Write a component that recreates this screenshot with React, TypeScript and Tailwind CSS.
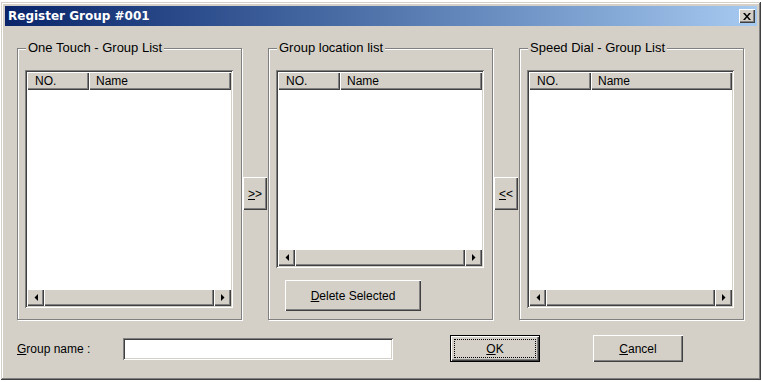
import React from 'react';

const raised = 'bg-[#d4d0c8] shadow-[inset_1px_1px_0_#ffffff,inset_-1px_-1px_0_#404040,inset_-2px_-2px_0_#808080]';
const sunken = 'shadow-[inset_1px_1px_0_#808080,inset_-1px_-1px_0_#ffffff,inset_2px_2px_0_#404040,inset_-2px_-2px_0_#d4d0c8]';

function Arrow({ dir }: { dir: 'left' | 'right' }) {
    return (
        <svg width="4" height="7" viewBox="0 0 4 7">
            {dir === 'left' ? <path d="M4 0 L4 7 L0.5 3.5 Z" fill="#000" /> : <path d="M0 0 L0 7 L3.5 3.5 Z" fill="#000" />}
        </svg>
    );
}

function HScroll() {
    return (
        <div className="flex h-[17px] shrink-0">
            <div className={`w-[17px] flex items-center justify-center ${raised}`}>
                <Arrow dir="left" />
            </div>
            <div className={`flex-1 ${raised}`} />
            <div className={`w-[17px] flex items-center justify-center ${raised}`}>
                <Arrow dir="right" />
            </div>
        </div>
    );
}

function ListView({ width, height }: { width: number; height: number }) {
    return (
        <div className={`flex flex-col p-[2px] bg-white ${sunken}`} style={{ width, height }}>
            <div className="flex h-[18px] shrink-0">
                <div className={`w-[62px] pl-[8px] leading-[18px] ${raised}`}>NO.</div>
                <div className={`flex-1 pl-[7px] leading-[18px] ${raised}`}>Name</div>
            </div>
            <div className="flex-1 bg-white" />
            <HScroll />
        </div>
    );
}

function GroupBox({ label, children }: { label: string; children: React.ReactNode }) {
    return (
        <div className="relative w-[225px] h-[272px] border border-[#808080] shadow-[inset_1px_1px_0_#ffffff,1px_1px_0_#ffffff] pl-[7px] pt-[21px]">
            <span className="absolute left-[8px] top-[-8px] bg-[#d4d0c8] px-[2px] text-[13px] leading-[14px]">{label}</span>
            {children}
        </div>
    );
}

function Button({ w, h, children, isDefault }: { w: number; h: number; children: React.ReactNode; isDefault?: boolean }) {
    if (isDefault) {
        return (
            <div className="border border-black" style={{ width: w, height: h }}>
                <div className={`h-full w-full p-[3px] ${raised}`}>
                    <div className="h-full w-full border border-dotted border-black flex items-center justify-center">
                        {children}
                    </div>
                </div>
            </div>
        );
    }
    return (
        <div className={`flex items-center justify-center ${raised}`} style={{ width: w, height: h }}>
            {children}
        </div>
    );
}

export default function App() {
    return (
        <div className="min-h-[382px] bg-white pt-[2px] pl-[1px] text-[12px] text-black" style={{ fontFamily: '"Liberation Sans", Arial, sans-serif' }}>
            <div className="w-[760px] h-[378px] bg-[#d4d0c8] p-[4px] flex flex-col shadow-[inset_-1px_-1px_0_#404040,inset_1px_1px_0_#d4d0c8,inset_-2px_-2px_0_#808080,inset_2px_2px_0_#ffffff]">
                {/* title bar */}
                <div className="h-[20px] shrink-0 flex items-center justify-between bg-linear-to-r from-[#0a246a] to-[#a6caf0] pl-[3px] pr-[2px]">
                    <span className="text-white font-bold text-[12px]" style={{ fontFamily: '"DejaVu Sans", Verdana, sans-serif' }}>
                        Register Group #001
                    </span>
                    <div className={`w-[16px] h-[14px] flex items-center justify-center ${raised}`}>
                        <svg width="8" height="7" viewBox="0 0 8 7">
                            <path d="M0 0 L2 0 L4 2.5 L6 0 L8 0 L5 3.5 L8 7 L6 7 L4 4.5 L2 7 L0 7 L3 3.5 Z" fill="#000" />
                        </svg>
                    </div>
                </div>

                {/* groups */}
                <div className="flex items-start pl-[12px] mt-[22px]">
                    <GroupBox label="One Touch - Group List">
                        <ListView width={208} height={238} />
                    </GroupBox>
                    <div className="w-[26px] flex justify-center mt-[129px]">
                        <Button w={24} h={33}>
                            <span><u>&gt;</u>&gt;</span>
                        </Button>
                    </div>
                    <GroupBox label="Group location list">
                        <ListView width={208} height={198} />
                        <div className="mt-[12px] ml-[9px]">
                            <Button w={136} h={31}>
                                <span><u>D</u>elete Selected</span>
                            </Button>
                        </div>
                    </GroupBox>
                    <div className="w-[26px] flex justify-center mt-[129px]">
                        <Button w={24} h={33}>
                            <span><u>&lt;</u>&lt;</span>
                        </Button>
                    </div>
                    <GroupBox label="Speed Dial - Group List">
                        <ListView width={207} height={238} />
                    </GroupBox>
                </div>

                {/* bottom row */}
                <div className="flex items-center pl-[12px] mt-[15px] h-[27px]">
                    <span className="w-[106px]"><u>G</u>roup name :</span>
                    <div className={`w-[270px] h-[22px] bg-white ${sunken}`} />
                    <div className="ml-[57px]">
                        <Button w={90} h={27} isDefault>
                            <span><u>O</u>K</span>
                        </Button>
                    </div>
                    <div className="ml-[53px]">
                        <Button w={90} h={27}>
                            <span><u>C</u>ancel</span>
                        </Button>
                    </div>
                </div>
            </div>
        </div>
    );
}
